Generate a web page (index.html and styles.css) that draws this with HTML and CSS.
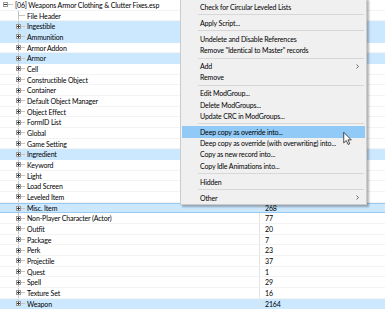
FILE: index.html
```html
<!DOCTYPE html>
<html lang="en">
<head>
    <meta charset="UTF-8">
    <title>Record Tree</title>
    <link rel="stylesheet" href="styles.css">
</head>
<body>

<div class="tree">
    <div class="row root"><div class="name"><span class="exp minus"></span><span class="stub"></span><span class="label">[06] Weapons Armor Clothing &amp; Clutter Fixes.esp</span></div><div class="val"></div></div>
    <div class="row child first"><div class="name"><span class="stub long"></span><span class="label">File Header</span></div><div class="val"></div></div>
    <div class="row child sel"><div class="name"><span class="exp"></span><span class="stub"></span><span class="label">Ingestible</span></div><div class="val"></div></div>
    <div class="row child sel"><div class="name"><span class="exp"></span><span class="stub"></span><span class="label">Ammunition</span></div><div class="val"></div></div>
    <div class="row child"><div class="name"><span class="exp"></span><span class="stub"></span><span class="label">Armor Addon</span></div><div class="val"></div></div>
    <div class="row child sel"><div class="name"><span class="exp"></span><span class="stub"></span><span class="label">Armor</span></div><div class="val"></div></div>
    <div class="row child"><div class="name"><span class="exp"></span><span class="stub"></span><span class="label">Cell</span></div><div class="val"></div></div>
    <div class="row child"><div class="name"><span class="exp"></span><span class="stub"></span><span class="label">Constructible Object</span></div><div class="val"></div></div>
    <div class="row child"><div class="name"><span class="exp"></span><span class="stub"></span><span class="label">Container</span></div><div class="val"></div></div>
    <div class="row child"><div class="name"><span class="exp"></span><span class="stub"></span><span class="label">Default Object Manager</span></div><div class="val"></div></div>
    <div class="row child"><div class="name"><span class="exp"></span><span class="stub"></span><span class="label">Object Effect</span></div><div class="val"></div></div>
    <div class="row child"><div class="name"><span class="exp"></span><span class="stub"></span><span class="label">FormID List</span></div><div class="val"></div></div>
    <div class="row child"><div class="name"><span class="exp"></span><span class="stub"></span><span class="label">Global</span></div><div class="val"></div></div>
    <div class="row child"><div class="name"><span class="exp"></span><span class="stub"></span><span class="label">Game Setting</span></div><div class="val"></div></div>
    <div class="row child sel"><div class="name"><span class="exp"></span><span class="stub"></span><span class="label">Ingredient</span></div><div class="val"></div></div>
    <div class="row child"><div class="name"><span class="exp"></span><span class="stub"></span><span class="label">Keyword</span></div><div class="val"></div></div>
    <div class="row child"><div class="name"><span class="exp"></span><span class="stub"></span><span class="label">Light</span></div><div class="val"></div></div>
    <div class="row child"><div class="name"><span class="exp"></span><span class="stub"></span><span class="label">Load Screen</span></div><div class="val"></div></div>
    <div class="row child"><div class="name"><span class="exp"></span><span class="stub"></span><span class="label">Leveled Item</span></div><div class="val"></div></div>
    <div class="row child sel focus"><div class="name"><span class="exp"></span><span class="stub"></span><span class="label">Misc. Item</span></div><div class="val">268</div></div>
    <div class="row child"><div class="name"><span class="exp"></span><span class="stub"></span><span class="label">Non-Player Character (Actor)</span></div><div class="val">77</div></div>
    <div class="row child"><div class="name"><span class="exp"></span><span class="stub"></span><span class="label">Outfit</span></div><div class="val">20</div></div>
    <div class="row child"><div class="name"><span class="exp"></span><span class="stub"></span><span class="label">Package</span></div><div class="val">7</div></div>
    <div class="row child"><div class="name"><span class="exp"></span><span class="stub"></span><span class="label">Perk</span></div><div class="val">23</div></div>
    <div class="row child"><div class="name"><span class="exp"></span><span class="stub"></span><span class="label">Projectile</span></div><div class="val">37</div></div>
    <div class="row child"><div class="name"><span class="exp"></span><span class="stub"></span><span class="label">Quest</span></div><div class="val">1</div></div>
    <div class="row child"><div class="name"><span class="exp"></span><span class="stub"></span><span class="label">Spell</span></div><div class="val">29</div></div>
    <div class="row child"><div class="name"><span class="exp"></span><span class="stub"></span><span class="label">Texture Set</span></div><div class="val">16</div></div>
    <div class="row child sel last"><div class="name"><span class="exp"></span><span class="stub"></span><span class="label">Weapon</span></div><div class="val">2164</div></div>
</div>

<div class="menu">
    <div class="item">Check for Circular Leveled Lists</div>
    <div class="sep"></div>
    <div class="item">Apply Script...</div>
    <div class="sep"></div>
    <div class="item">Undelete and Disable References</div>
    <div class="item">Remove "Identical to Master" records</div>
    <div class="sep"></div>
    <div class="item sub">Add<svg class="chev" width="3" height="5" viewBox="0 0 3 5"><path d="M0.5 0.5 L2.5 2.5 L0.5 4.5" fill="none" stroke="#444" stroke-width="0.8"/></svg></div>
    <div class="item">Remove</div>
    <div class="sep"></div>
    <div class="item">Edit ModGroup...</div>
    <div class="item">Delete ModGroups...</div>
    <div class="item">Update CRC in ModGroups...</div>
    <div class="sep"></div>
    <div class="item hot">Deep copy as override into...</div>
    <div class="item">Deep copy as override (with overwriting) into...</div>
    <div class="item">Copy as new record into...</div>
    <div class="item">Copy Idle Animations into...</div>
    <div class="sep"></div>
    <div class="item">Hidden</div>
    <div class="sep"></div>
    <div class="item sub">Other<svg class="chev" width="3" height="5" viewBox="0 0 3 5"><path d="M0.5 0.5 L2.5 2.5 L0.5 4.5" fill="none" stroke="#444" stroke-width="0.8"/></svg></div>
</div>

<svg class="cursor" width="9" height="13" viewBox="0 0 12 19">
    <path d="M0.5 0.5 L0.5 16 L4.2 12.4 L6.8 18.2 L9.2 17.2 L6.7 11.5 L11.5 11.5 Z" fill="#fff" stroke="#000" stroke-width="1"/>
</svg>

</body>
</html>
```

FILE: styles.css
```css
body {
    margin: 0;
    width: 385px;
    height: 315px;
    overflow: hidden;
    position: relative;
    background-color: #fff;
    font-family: Lato, "Noto Sans", sans-serif;
    font-size: 7px;
    letter-spacing: -0.15px;
    color: #000;
}
.tree {
    display: flex;
    flex-direction: column;
}
.row {
    display: grid;
    grid-template-columns: 259px 1fr;
    height: 10.68px;
    box-sizing: border-box;
    border-bottom: 1px solid #f3f3f3;
}
.row.sel {
    background-color: #cce8ff;
    border-bottom-color: #cce8ff;
}
.row.focus {
    border-top: 1px solid #99c9ef;
    border-bottom: 1px solid #99c9ef;
}
.name {
    position: relative;
    display: flex;
    align-items: center;
    padding-left: 16px;
    white-space: nowrap;
}
.root .name {
    padding-left: 3px;
}
.child .name::before {
    content: "";
    position: absolute;
    left: 18px;
    top: 0;
    bottom: 0;
    width: 1px;
    background-color: #c4c4c4;
}
.child.last .name::before {
    bottom: 50%;
}
.exp {
    position: relative;
    z-index: 1;
    width: 5px;
    height: 5px;
    box-sizing: border-box;
    border: 1px solid #9a9a9a;
    background-color: #fff;
}
.exp::before, .exp::after {
    content: "";
    position: absolute;
    background-color: #3c3c3c;
}
.exp::before {
    left: 0;
    top: 1px;
    width: 3px;
    height: 1px;
}
.exp::after {
    left: 1px;
    top: 0;
    width: 1px;
    height: 3px;
}
.exp.minus::after {
    display: none;
}
.stub {
    width: 4px;
    height: 1px;
    background-color: #c4c4c4;
    margin-right: 2px;
}
.root .stub {
    width: 5px;
}
.stub.long {
    margin-left: 2.5px;
    width: 6.5px;
}
.val {
    border-left: 1px solid #e3e3e3;
    padding-left: 5px;
    display: flex;
    align-items: center;
}
.menu {
    position: absolute;
    left: 180px;
    top: -2px;
    width: 185px;
    background-color: #f0f0f0;
    border: 1px solid #cccccc;
    box-shadow: 2px 2px 2px rgba(0, 0, 0, 0.3);
    padding: 2.35px 0 1px;
}
.item {
    height: 11.3px;
    margin: 0 1px;
    padding: 0 6px 0 18px;
    display: flex;
    align-items: center;
    justify-content: space-between;
    white-space: nowrap;
}
.item.hot {
    background-color: #91c9f7;
}
.sep {
    height: 4.65px;
    margin: 0 2px 0 17px;
    display: flex;
    align-items: center;
}
.sep::before {
    content: "";
    flex: 1;
    height: 1px;
    background-color: #d7d7d7;
}
.cursor {
    position: absolute;
    left: 343px;
    top: 132px;
}
```
